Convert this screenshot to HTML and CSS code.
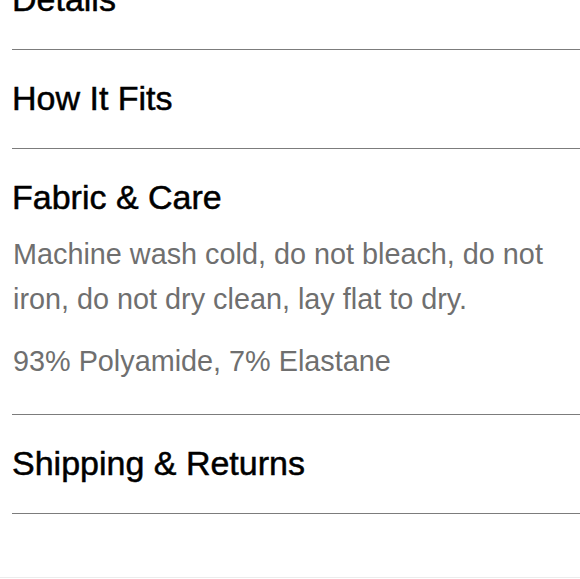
FILE: index.html
```html
<!DOCTYPE html>
<html lang="en">

<head>
  <meta charset="UTF-8">
  <meta name="viewport" content="width=device-width, initial-scale=1.0">
  <title>Product details</title>
  <link rel="stylesheet" href="styles.css">
</head>

<body>
  <div class="accordion">
    <div class="section">
      <h3 class="sectionTitle">Details</h3>
    </div>
    <div class="section">
      <h3 class="sectionTitle">How It Fits</h3>
    </div>
    <div class="section open">
      <h3 class="sectionTitle">Fabric &amp; Care</h3>
      <div class="sectionBody">
        <p>Machine wash cold, do not bleach, do not iron, do not dry clean, lay flat to dry.</p>
        <p>93% Polyamide, 7% Elastane</p>
      </div>
    </div>
    <div class="section">
      <h3 class="sectionTitle">Shipping &amp; Returns</h3>
    </div>
  </div>
  <div class="footer"></div>
</body>

</html>
```

FILE: styles.css
```css
body {
  margin: 0;
  background: #fff;
  font-family: "Liberation Sans", Arial, sans-serif;
  overflow: hidden;
}
.accordion {
  margin-top: -49px;
  margin-left: 12px;
}
.section {
  padding: 28px 0 30px;
  border-bottom: 1px solid #7c7c7c;
}
.sectionTitle {
  margin: 0;
  font-size: 34px;
  line-height: 40px;
  font-weight: normal;
  color: #000;
  -webkit-text-stroke: 0.5px #000;
}
.sectionBody {
  margin-top: 15px;
  padding-left: 1px;
  color: #6f6f6f;
  font-size: 28.8px;
  line-height: 45px;
}
.sectionBody p {
  margin: 0;
}
.sectionBody p + p {
  margin-top: 17px;
}
.footer {
  margin-top: 63px;
  border-top: 1px solid #ececec;
  height: 20px;
}
```
